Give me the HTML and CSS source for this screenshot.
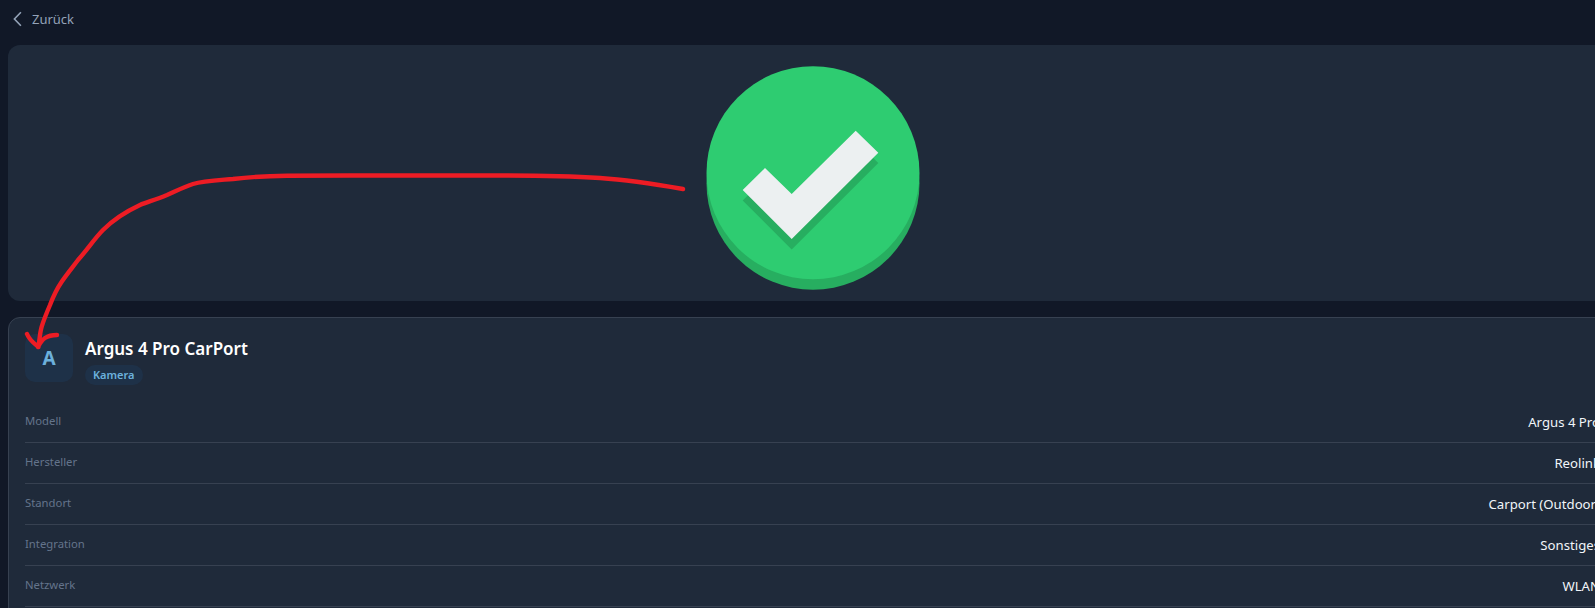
FILE: index.html
```html
<!DOCTYPE html>
<html lang="de">
<head>
<meta charset="utf-8">
<title>Argus 4 Pro CarPort</title>
<link rel="stylesheet" href="styles.css">
</head>
<body>
<main class="page">
  <a class="back" href="#">
    <svg class="back-icon" width="9" height="16" viewBox="0 0 9 16"><path d="M7.9 1.2 1.4 8l6.5 6.8" fill="none" stroke="#94a3b8" stroke-width="1.6"/></svg>
    <span>Zurück</span>
  </a>
  <section class="hero">
    <svg width="256" height="256" viewBox="0 0 256 256">
      <circle cx="128" cy="138.2" r="106.5" fill="#27ae60"/>
      <circle cx="128" cy="127.7" r="106.5" fill="#2ecc71"/>
      <path d="M170.7 96 193.3 118 106.7 204.5 57.7 155.5 80 133.5 106.7 159.5Z" fill="#27ae60"/>
      <path d="M170.7 85.7 193.3 107.7 106.7 194 57.7 145 80 123 106.7 149Z" fill="#ecf0f1"/>
    </svg>
  </section>
  <section class="card">
    <header class="head">
      <div class="avatar">A</div>
      <div class="head-text">
        <h1>Argus 4 Pro CarPort</h1>
        <span class="badge">Kamera</span>
      </div>
    </header>
    <dl class="rows">
      <div class="row"><dt>Modell</dt><dd>Argus 4 Pro</dd></div>
      <div class="row"><dt>Hersteller</dt><dd>Reolink</dd></div>
      <div class="row"><dt>Standort</dt><dd>Carport (Outdoor)</dd></div>
      <div class="row"><dt>Integration</dt><dd>Sonstiges</dd></div>
      <div class="row"><dt>Netzwerk</dt><dd>WLAN</dd></div>
    </dl>
  </section>
  <svg class="annotation" width="700" height="360" viewBox="0 0 700 360">
    <path d="M683 189C660 185 630 180 600 178C550 175 510 175.5 470 175.5L350 175.5L287 175.7C265 176 250 177 233 179C215 180.500 203 181 193 184C185 186.500 176 191 167 195C155 200 147 202 140 205C125 212 112 221 103 230C95 238 87 250 78 260C72 268 67 274 61.7 281.700C56 290 53 297 50 305C47 312 44 319 41.7 326.700C40 332 39.500 340 38.500 347C35 344 30 341 27 334M38 347C40 343 42 340 45 338C48 336 52 335 57 335" fill="none" stroke="#ed1c24" stroke-width="4.4" stroke-linecap="round" stroke-linejoin="round"/>
  </svg>
</main>
</body>
</html>
```
FILE: styles.css
```css
html, body {
  margin: 0;
  height: 608px;
  overflow: hidden;
  background: #111827;
}
body {
  font-family: "Noto Sans", "Open Sans", sans-serif;
  color: #f1f5f9;
}
.page {
  position: relative;
  box-sizing: border-box;
  width: 1625px;
  padding: 0 8px;
  display: flex;
  flex-direction: column;
}
.back {
  height: 45px;
  display: flex;
  align-items: center;
  gap: 10px;
  padding: 0 0 7px 5px;
  box-sizing: border-box;
  color: #94a3b8;
  font-size: 13px;
  text-decoration: none;
}
.back-icon {
  flex: none;
}
.hero {
  height: 256px;
  background: #1f2a3a;
  border-radius: 12px;
  display: flex;
  justify-content: center;
}
.card {
  margin-top: 16px;
  background: #1f2a3a;
  border: 1px solid #374151;
  border-radius: 12px;
  padding: 16px;
}
.head {
  display: flex;
  gap: 12px;
  margin-bottom: 17px;
}
.avatar {
  width: 48px;
  height: 48px;
  border-radius: 10px;
  background: #1e3148;
  color: #6cb0dc;
  display: flex;
  align-items: center;
  justify-content: center;
  font-size: 19px;
  font-weight: 700;
}
.head-text {
  display: flex;
  flex-direction: column;
  align-items: flex-start;
  gap: 5px;
  padding-top: 4px;
}
h1 {
  margin: 0;
  font-size: 17px;
  line-height: 22px;
  font-weight: 600;
  color: #fff;
}
.badge {
  height: 20px;
  line-height: 20px;
  padding: 0 8px;
  border-radius: 10px;
  background: #1e3148;
  color: #6cb0dc;
  font-size: 11px;
  font-weight: 600;
}
.rows {
  margin: 0;
}
.row {
  box-sizing: border-box;
  height: 41px;
  display: flex;
  justify-content: space-between;
  align-items: center;
  border-bottom: 1px solid #374151;
}
dt {
  font-size: 11.3px;
  color: #64748b;
  position: relative;
  top: -2px;
}
dd {
  margin: 0;
  font-size: 13.2px;
  color: #f1f5f9;
}
.annotation {
  position: absolute;
  left: 0;
  top: 0;
  pointer-events: none;
}
```
